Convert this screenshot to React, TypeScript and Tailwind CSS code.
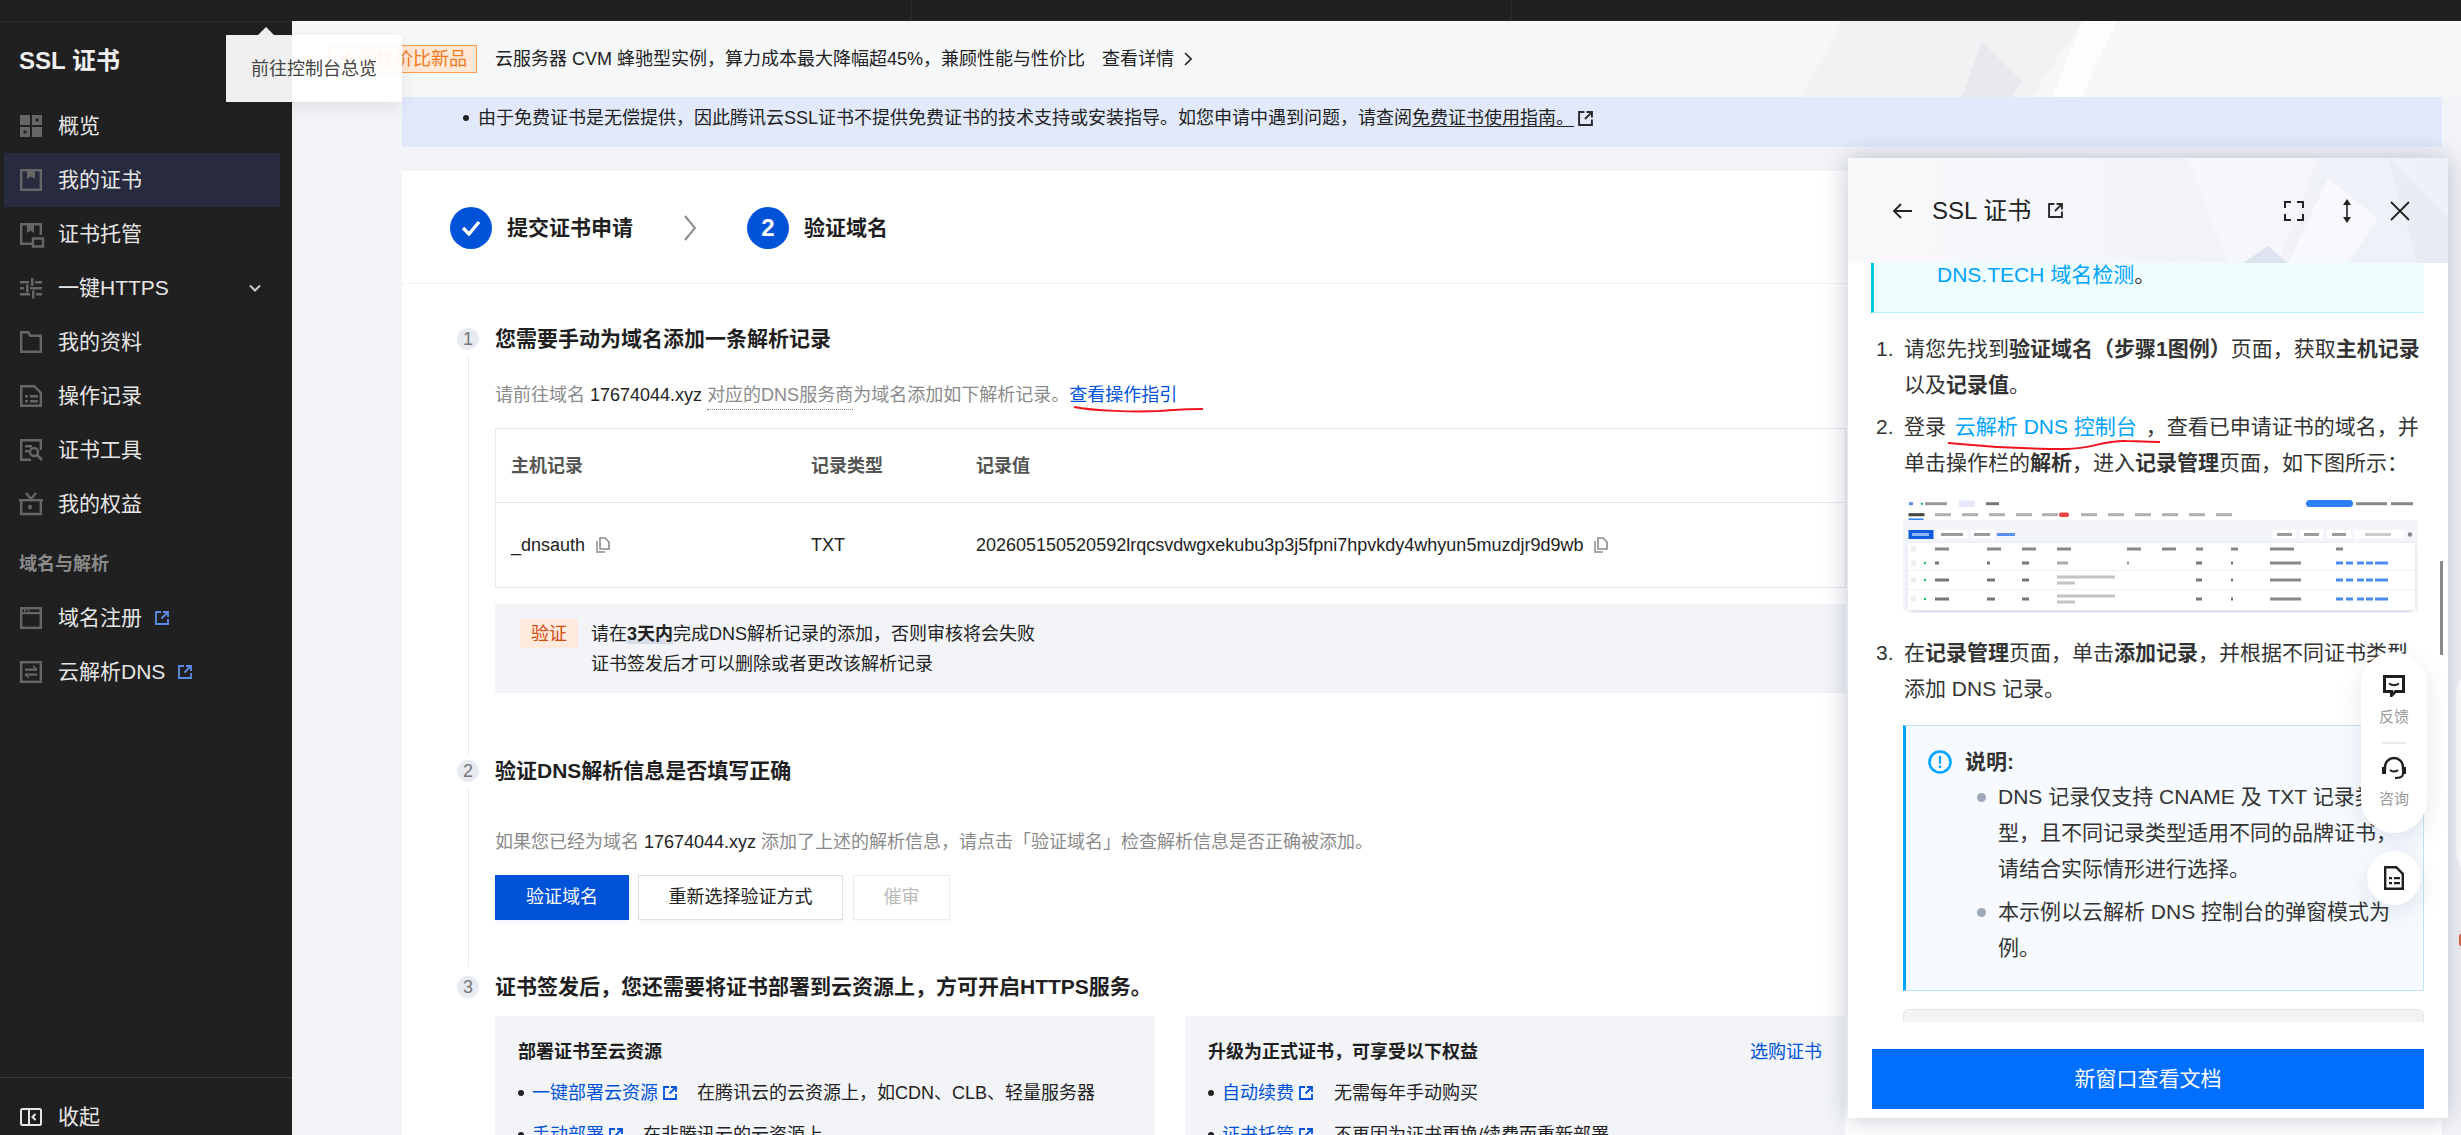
import React from "react";

const Ext = ({ c = "#2b2b2b", s = 14 }: { c?: string; s?: number }) => (
  <svg width={s} height={s} viewBox="0 0 14 14" fill="none" stroke={c} strokeWidth="1.8" className="shrink-0">
    <path d="M6 1H1v12h12V8" />
    <path d="M8 1h5v5" />
    <path d="M13 1 6.5 7.5" />
  </svg>
);

const Copy = () => (
  <svg width="14" height="16" viewBox="0 0 14 16" fill="none" className="shrink-0">
    <path d="M4 1h5l4 4v7H4z" stroke="#8a8a8a" strokeWidth="1.6" />
    <path d="M1 4v11h8" stroke="#a8a8a8" strokeWidth="2" />
  </svg>
);

const G = "#666666";
const icons: Record<string, React.ReactNode> = {
  overview: (
    <>
      <rect x="0" y="0" width="10" height="10" fill={G} />
      <rect x="12" y="0" width="10" height="10" fill={G} />
      <rect x="15.5" y="3.5" width="3" height="3" fill="#202020" />
      <rect x="0" y="12" width="10" height="10" fill={G} />
      <rect x="3.5" y="15.5" width="3" height="3" fill="#202020" />
      <rect x="12" y="12" width="10" height="10" fill={G} />
    </>
  ),
  cert: (
    <>
      <rect x="1.2" y="1.2" width="19.6" height="19.6" fill="none" stroke={G} strokeWidth="2.4" />
      <path d="M7 2v8l4-2.4L15 10V2z" fill={G} />
    </>
  ),
  host: (
    <>
      <path d="M14 20.8H1.2V1.2h19.6V13" fill="none" stroke={G} strokeWidth="2.4" />
      <path d="M7 2v8l3.5-2.4L14 10V2z" fill={G} />
      <path d="M13 15.5h10v8H13z" fill="none" stroke={G} strokeWidth="2.4" />
      <path d="M13 12h10v2H13z" fill="#202020" />
    </>
  ),
  https: (
    <>
      <path d="M0 4h9v2.5H0zM15 4h7v2.5h-7zM0 10h4v2.5H0zM10 10h12v2.5H10zM0 16h10v2.5H0zM16 16h6v2.5h-6z" fill={G} />
      <path d="M11 1h2.5v8H11zM6 7.5h2.5v8H6zM12 13.5h2.5v8H12z" fill={G} />
    </>
  ),
  folder: <path d="M1.2 20.8V1.2h7l2 3.6h10.6v16z" fill="none" stroke={G} strokeWidth="2.4" />,
  record: (
    <>
      <path d="M1.2 20.8V1.2h13l6.6 6.6v13z" fill="none" stroke={G} strokeWidth="2.4" />
      <path d="M5 10h3v2.4H5zM10 10h8v2.4h-8zM5 15h3v2.4H5zM10 15h8v2.4h-8z" fill={G} />
    </>
  ),
  tool: (
    <>
      <path d="M11 20.8H1.2V1.2h19.6V11" fill="none" stroke={G} strokeWidth="2.4" />
      <path d="M5 6h7v2.4H5zM5 11h4v2.4H5z" fill={G} />
      <circle cx="14" cy="13" r="4" fill="none" stroke={G} strokeWidth="2.4" />
      <path d="m17 16 5 5" stroke={G} strokeWidth="2.8" />
    </>
  ),
  gift: (
    <>
      <path d="M-1 6h24v2.4H-1z" fill={G} />
      <path d="M1.2 8v13h19.6V8" fill="none" stroke={G} strokeWidth="2.4" />
      <path d="M6 0l5 6 5-6" fill="none" stroke={G} strokeWidth="2.4" />
      <circle cx="10" cy="14" r="2.2" fill={G} />
    </>
  ),
  domain: (
    <>
      <rect x="1.2" y="1.2" width="19.6" height="19.6" fill="none" stroke={G} strokeWidth="2.4" />
      <path d="M1 5h20v2.2H1z" fill={G} />
      <path d="M4 2.5h2v2H4zM7.5 2.5h2v2h-2z" fill={G} />
    </>
  ),
  dns: (
    <>
      <rect x="1.2" y="1.2" width="19.6" height="19.6" fill="none" stroke={G} strokeWidth="2.4" />
      <path d="M5 7.5h12v2.2H5zM5 12.5h12v2.2H5z" fill={G} />
      <path d="m13 5 4 3.5M9 17l-4-3.5" stroke={G} strokeWidth="1.6" fill="none" />
    </>
  ),
};

const Item = ({
  icon,
  label,
  active,
  ext,
  chevron,
}: {
  icon: string;
  label: string;
  active?: boolean;
  ext?: boolean;
  chevron?: boolean;
}) => (
  <div className={`mr-3 ml-1 flex h-[54px] items-center pl-4 ${active ? "bg-[#282b3e]" : ""}`}>
    <svg width="22" height="22" viewBox="0 0 22 22" className="shrink-0 overflow-visible">
      {icons[icon]}
    </svg>
    <span className="ml-4 text-[21px] leading-6 text-[#e6e6e6]">{label}</span>
    {ext && (
      <span className="ml-[13px]">
        <Ext c="#5b8de8" />
      </span>
    )}
    {chevron && (
      <svg width="12" height="8" viewBox="0 0 12 8" fill="none" stroke="#cccccc" strokeWidth="2" className="mr-[19px] ml-auto">
        <path d="m1 1.5 5 5 5-5" />
      </svg>
    )}
  </div>
);

const Badge = ({ n }: { n: number }) => (
  <div className="flex h-[22px] w-[22px] shrink-0 items-center justify-center rounded-full bg-[#e8ebf1] text-[18px] leading-none text-[#777777]">
    {n}
  </div>
);

const Section = ({ n, children, line = true, gap }: { n: number; children: React.ReactNode; line?: boolean; gap: string }) => (
  <div className={`flex gap-4 ${gap}`}>
    <div className="flex w-[22px] shrink-0 flex-col items-center">
      <Badge n={n} />
      {line && <div className="mt-[7px] w-px flex-1 bg-[#e8ebf1]" />}
    </div>
    <div className="min-w-0 flex-1">{children}</div>
  </div>
);

const Title = ({ children }: { children: React.ReactNode }) => (
  <div className="text-[21px] leading-[22px] font-bold text-[#1f1f1f]">{children}</div>
);

const Bullet = ({ link, text, w }: { link: string; text: string; w: string }) => (
  <div className="flex h-6 items-center text-[18px] leading-6 text-[#222222]">
    <span className="mr-2 h-[6px] w-[6px] shrink-0 rounded-full bg-[#222222]" />
    <span className="flex items-center gap-[5px] text-[#0052d9]">
      {link}
      <Ext c="#0052d9" />
    </span>
    <span className={w}>{text}</span>
  </div>
);

function Thumb() {
  const rows = [
    { y: 65, a: true },
    { y: 82, a: false },
    { y: 101, a: false },
  ];
  const tabs = [5.5, 32, 59, 86, 113, 139, 178, 205, 232, 259, 286, 313];
  const heads = [32, 84, 119, 154, 224, 259, 293, 328, 367];
  const ops = [433, 443, 454, 463, 472];
  const T = ({ x, y, w, c = "#9a9a9a" }: { x: number; y: number; w: number; c?: string }) => (
    <rect x={x} y={y - 1.5} width={w} height="3" fill={c} />
  );
  return (
    <svg width="515" height="115" viewBox="0 0 515 115" className="block">
      <defs>
        <filter id="b" x="-5%" y="-5%" width="110%" height="110%">
          <feGaussianBlur stdDeviation="0.4" />
        </filter>
        <filter id="s" x="-5%" y="-20%" width="110%" height="140%">
          <feGaussianBlur stdDeviation="3" />
        </filter>
      </defs>
      <rect width="515" height="115" fill="#ffffff" />
      <rect y="22" width="515" height="90" fill="#f3f5fa" />
      <rect x="7" y="48" width="503" height="66" fill="#ced3e2" filter="url(#s)" />
      <rect x="5" y="45" width="507" height="67" fill="#ffffff" />
      <path d="M5 72.5h507M5 91.5h507" stroke="#f1f2f5" />
      <rect x="5.5" y="20.5" width="15" height="1.5" fill="#2f7ff0" />
      <rect x="5.5" y="32" width="25" height="9" fill="#0f5ce0" />
      <rect x="34.5" y="32" width="29.5" height="9" fill="#ffffff" />
      <rect x="68" y="32" width="23" height="9" fill="#ffffff" />
      <rect x="370" y="32" width="23" height="9" fill="#ffffff" />
      <rect x="397" y="32" width="23" height="9" fill="#ffffff" />
      <rect x="424" y="32" width="24" height="9" fill="#ffffff" />
      <rect x="451" y="32" width="50" height="9" fill="#ffffff" />
      <g filter="url(#b)">
        <T x={6} y={5.7} w={4} c="#5a8ff0" />
        <circle cx="19" cy="5.7" r="1.2" fill="#16c060" />
        <T x={22} y={5.7} w={22} c="#999999" />
        <rect x="56" y="2.5" width="16" height="6.5" fill="#e6e8fb" />
        <T x={83} y={5.7} w={13} c="#777777" />
        <rect x="403" y="2" width="47" height="7" rx="3.5" fill="#2f80f7" />
        <T x={453} y={5.7} w={31} c="#888888" />
        <T x={488} y={5.7} w={22} c="#888888" />
        {tabs.map((x, i) => (
          <T key={x} x={x} y={16.7} w={16} c={i === 0 ? "#444444" : "#b0b0b0"} />
        ))}
        <rect x="156" y="14.5" width="10" height="4.5" rx="2" fill="#ef4444" />
        <T x={9} y={36.5} w={17} c="#8fb4f5" />
        <T x={38} y={36.5} w={22} />
        <T x={71} y={36.5} w={16} />
        <T x={94} y={36.5} w={18} c="#5a8ff0" />
        <T x={374} y={36.5} w={15} />
        <T x={401} y={36.5} w={15} />
        <T x={429} y={36.5} w={14} />
        <T x={462} y={36.5} w={26} c="#cccccc" />
        <circle cx="507" cy="36.5" r="2.2" fill="#888888" />
        {heads.map((x) => (
          <T key={x} x={x} y={51} w={x === 293 || x === 328 ? 7 : x === 367 ? 24 : 14} c="#888888" />
        ))}
        <T x={433} y={51} w={7} c="#888888" />
        <rect x="8" y="48.5" width="5" height="5" fill="#eeeeee" />
        {rows.map(({ y, a }) => (
          <g key={y}>
            <rect x="8" y={y - 2.5} width="5" height="5" fill="#eeeeee" />
            <circle cx="22" cy={y} r="1.2" fill="#16c060" />
            <T x={32} y={y} w={a ? 4 : 14} c="#777777" />
            <T x={84} y={y} w={a ? 3 : 8} c="#777777" />
            <T x={119} y={y} w={7} c="#777777" />
            {a ? (
              <T x={154} y={y} w={11} c="#aaaaaa" />
            ) : (
              <>
                <T x={154} y={y - 3} w={58} c="#c4c4c4" />
                <T x={154} y={y + 3} w={18} c="#c4c4c4" />
              </>
            )}
            {a && <T x={224} y={y} w={2} c="#999999" />}
            <T x={293} y={y} w={6} c="#777777" />
            <T x={328} y={y} w={2} c="#777777" />
            <T x={367} y={y} w={31} c="#888888" />
            {ops.map((x) => (
              <T key={x} x={x} y={y} w={x === 472 ? 13 : 7} c="#4a8cf0" />
            ))}
          </g>
        ))}
      </g>
    </svg>
  );
}

const Decor = () => (
  <svg className="absolute inset-0 h-full w-full" preserveAspectRatio="none" viewBox="0 0 600 105">
    <polygon points="340,0 470,0 430,105 380,105" fill="#ffffff" opacity="0.35" />
    <polygon points="480,20 530,60 500,105 440,105" fill="#ffffff" opacity="0.5" />
    <polygon points="540,0 600,60 600,105 570,105" fill="#e4e7f3" opacity="0.6" />
    <polygon points="420,88 440,105 395,105" fill="#cfd6ea" opacity="0.6" />
  </svg>
);

export default function App() {
  return (
    <div className="relative h-[1135px] w-[2461px] overflow-hidden bg-[#f3f4f8] [font-family:'Liberation_Sans','Noto_Sans_CJK_SC',sans-serif]">
      <div className="flex h-[21px] bg-[#202020]">
        <div className="w-[912px] border-r border-[#2c2c2c]" />
        <div className="w-[600px] border-r border-[#2c2c2c]" />
      </div>

      <div className="flex h-[1114px]">
        <aside className="flex w-[292px] shrink-0 flex-col border-t border-[#2c2c2c] bg-[#202020]">
          <div className="flex h-[77px] items-center pl-[19px] text-[24px] font-bold text-[#f0f0f0]">SSL 证书</div>
          <Item icon="overview" label="概览" />
          <Item icon="cert" label="我的证书" active />
          <Item icon="host" label="证书托管" />
          <Item icon="https" label="一键HTTPS" chevron />
          <Item icon="folder" label="我的资料" />
          <Item icon="record" label="操作记录" />
          <Item icon="tool" label="证书工具" />
          <Item icon="gift" label="我的权益" />
          <div className="flex h-[60px] items-center pt-[6px] pl-[19px] text-[18px] font-bold text-[#8a8a8a]">域名与解析</div>
          <Item icon="domain" label="域名注册" ext />
          <Item icon="dns" label="云解析DNS" ext />
          <div className="mt-auto flex h-[58px] items-center border-t border-[#3a3a3a] pt-[20px] pl-5">
            <svg width="22" height="18" viewBox="0 0 22 18" fill="none" stroke="#e6e6e6" strokeWidth="2" className="shrink-0">
              <rect x="1" y="1" width="20" height="16" rx="1.5" />
              <path d="M9 1v16M15.5 6 12.5 9l3 3" />
            </svg>
            <span className="ml-4 text-[21px] leading-6 text-[#e6e6e6]">收起</span>
          </div>
        </aside>

        <main className="min-w-0 flex-1 overflow-hidden">
          <div className="relative flex h-[76px] items-center overflow-hidden bg-[#f6f7f9] pl-9">
            <svg className="absolute top-0 left-[1490px] h-[76px] w-[420px]" viewBox="0 0 420 76" fill="none">
              <polygon points="60,0 300,0 250,76 20,76" fill="#f1f2f4" />
              <polygon points="200,20 240,60 230,76 180,76" fill="#e8e9ec" />
              <polygon points="300,0 335,0 300,76 270,76" fill="#ffffff" opacity="0.7" />
            </svg>
            <div className="relative flex h-7 w-[149px] items-center border border-[#ff9c4d] bg-[#ffe8d6] pl-[11px] text-[18px] leading-6 text-[#f27a1a]">
              <svg width="14" height="18" viewBox="0 0 14 18" className="mr-[5px]">
                <path d="M9 0 1 10h5l-2 8 9-11H8z" fill="#f27a1a" />
              </svg>
              高性价比新品
            </div>
            <div className="relative ml-[18px] text-[18px] leading-6 text-[#222222]">云服务器 CVM 蜂驰型实例，算力成本最大降幅超45%，兼顾性能与性价比</div>
            <div className="relative ml-[17px] flex items-center gap-[10px] text-[18px] leading-6 text-[#222222]">
              查看详情
              <svg width="8" height="14" viewBox="0 0 8 14" fill="none" stroke="#222222" strokeWidth="1.6">
                <path d="m1 1 6 6-6 6" />
              </svg>
            </div>
          </div>

          <div className="pr-[19px] pl-[110px]">
            <div className="flex h-[50px] items-start bg-[#e1e9fb] pt-[9px] pl-[61px] text-[18px] leading-6 text-[#222222]">
              <span className="mt-[9px] mr-[9px] h-[6px] w-[6px] rounded-full bg-[#222222]" />
              <span className="whitespace-nowrap">
                由于免费证书是无偿提供，因此腾讯云SSL证书不提供免费证书的技术支持或安装指导。如您申请中遇到问题，请查阅
                <span className="underline underline-offset-2">免费证书使用指南。</span>
              </span>
              <span className="mt-[5px] ml-[4px]">
                <Ext s={15} />
              </span>
            </div>

            <div className="mt-6 h-[1000px] bg-white">
              <div className="flex h-[113px] items-center border-b border-[#f3f3f6] pt-[2px] pl-12">
                <div className="flex h-[42px] w-[42px] items-center justify-center rounded-full bg-[#0052d9]">
                  <svg width="20" height="16" viewBox="0 0 20 16" fill="none" stroke="#ffffff" strokeWidth="3.4">
                    <path d="m2 8 6 6L18 2" />
                  </svg>
                </div>
                <span className="ml-[15px] w-[126px] text-[21px] leading-6 font-bold text-[#1f1f1f]">提交证书申请</span>
                <svg width="12" height="26" viewBox="0 0 12 26" fill="none" stroke="#8c8c8c" strokeWidth="2" className="mx-[51px]">
                  <path d="m1 1 10 12L1 25" />
                </svg>
                <div className="flex h-[42px] w-[42px] items-center justify-center rounded-full bg-[#0052d9] text-[24px] font-bold text-white">2</div>
                <span className="ml-[15px] text-[21px] leading-6 font-bold text-[#1f1f1f]">验证域名</span>
              </div>

              <div className="pt-[44px] pl-[55px] whitespace-nowrap">
                <Section n={1} gap="mb-[6px]">
                  <Title>您需要手动为域名添加一条解析记录</Title>
                  <div className="mt-[33px] text-[18px] leading-6 text-[#8a8a8a]">
                    请前往域名 <span className="text-[#222222]">17674044.xyz</span>{" "}
                    <span className="border-b border-dotted border-[#888888] pb-[4px]">对应的DNS服务商</span>为域名添加如下解析记录。
                    <span className="text-[#0052d9]">查看操作指引</span>
                  </div>
                  <div className="mt-[21px] w-[1351px] border border-[#e8e8ee] text-[18px] leading-6">
                    <div className="grid h-[74px] grid-cols-[300px_165px_1fr] items-center border-b border-[#e8e8ee] pl-[15px] font-bold text-[#555555]">
                      <span>主机记录</span>
                      <span>记录类型</span>
                      <span>记录值</span>
                    </div>
                    <div className="grid h-[84px] grid-cols-[300px_165px_1fr] items-center pl-[15px] text-[#222222]">
                      <span className="flex items-center gap-[11px]">
                        _dnsauth
                        <Copy />
                      </span>
                      <span>TXT</span>
                      <span className="flex items-center gap-[11px]">
                        202605150520592lrqcsvdwgxekubu3p3j5fpni7hpvkdy4whyun5muzdjr9d9wb
                        <Copy />
                      </span>
                    </div>
                  </div>
                  <div className="mt-4 mb-[61px] flex h-[89px] w-[1351px] bg-[#f2f4f8] pt-[15px] pl-[25px] text-[18px] text-[#222222]">
                    <span className="flex h-[29px] w-[58px] items-center justify-center bg-[#ffeadd] leading-6 text-[#d54a0e]">验证</span>
                    <div className="ml-[13px] leading-[30px]">
                      <div>
                        请在
                        <span className="bg-linear-to-b from-transparent from-75% to-[#d6dce8] to-75% font-bold">3天内</span>
                        完成DNS解析记录的添加，否则审核将会失败
                      </div>
                      <div>证书签发后才可以删除或者更改该解析记录</div>
                    </div>
                  </div>
                </Section>

                <Section n={2} gap="mb-[9px]">
                  <Title>验证DNS解析信息是否填写正确</Title>
                  <div className="mt-[48px] text-[18px] leading-6 text-[#8a8a8a]">
                    如果您已经为域名 <span className="text-[#222222]">17674044.xyz</span> 添加了上述的解析信息，请点击「验证域名」检查解析信息是否正确被添加。
                  </div>
                  <div className="mt-[21px] mb-[47px] flex gap-[9px] text-[18px]">
                    <button className="h-[45px] w-[134px] bg-[#0052d9] text-white shadow-[0_3px_3px_rgba(0,82,217,0.05)]">验证域名</button>
                    <button className="h-[45px] w-[205px] border border-[#dcdfe7] bg-white text-[#222222] shadow-[0_3px_3px_rgba(0,0,0,0.03)]">重新选择验证方式</button>
                    <button className="ml-px h-[45px] w-[97px] border border-[#e8ebf1] bg-white text-[#bbbbbb] shadow-[0_3px_3px_rgba(0,0,0,0.02)]">催审</button>
                  </div>
                </Section>

                <Section n={3} gap="" line={false}>
                  <Title>证书签发后，您还需要将证书部署到云资源上，方可开启HTTPS服务。</Title>
                  <div className="mt-[18px] flex gap-[30px]">
                    <div className="h-[300px] w-[660px] bg-[#f2f4f8] pt-6 pl-[23px]">
                      <div className="text-[18px] leading-6 font-bold text-[#1f1f1f]">部署证书至云资源</div>
                      <div className="mt-[17px] flex flex-col gap-[18px]">
                        <Bullet link="一键部署云资源" text="在腾讯云的云资源上，如CDN、CLB、轻量服务器" w="ml-[20px]" />
                        <Bullet link="手动部署" text="在非腾讯云的云资源上" w="ml-[20px]" />
                      </div>
                    </div>
                    <div className="h-[300px] w-[660px] bg-[#f2f4f8] pt-6 pr-[23px] pl-[23px]">
                      <div className="flex justify-between text-[18px] leading-6">
                        <span className="font-bold text-[#1f1f1f]">升级为正式证书，可享受以下权益</span>
                        <span className="text-[#0052d9]">选购证书</span>
                      </div>
                      <div className="mt-[17px] flex flex-col gap-[18px]">
                        <Bullet link="自动续费" text="无需每年手动购买" w="ml-[21px]" />
                        <Bullet link="证书托管" text="不再因为证书更换/续费而重新部署" w="ml-[21px]" />
                      </div>
                    </div>
                  </div>
                </Section>
              </div>
            </div>
          </div>
        </main>
      </div>

      {/* scribble under 查看操作指引 */}
      <svg className="pointer-events-none absolute top-[400px] left-[1070px]" width="140" height="18" fill="none" stroke="#f0141e" strokeWidth="2">
        <path d="M4 7c20 4 60 5 85 4 16-1 25-2 44-2" />
      </svg>

      {/* tooltip */}
      <svg className="absolute top-[27px] left-[258px]" width="16" height="8" viewBox="0 0 16 8">
        <path d="M8 0 16 8H0z" fill="#ffffff" fillOpacity="0.93" />
      </svg>
      <div className="absolute top-[35px] left-[226px] flex h-[67px] w-[176px] items-center bg-white/[0.93] pl-[25px] text-[18px] leading-6 text-[#444444] shadow-[0_6px_16px_rgba(0,0,0,0.08)]">
        前往控制台总览
      </div>

      {/* widget behind the document panel */}
      <div className="absolute top-[673px] left-[2456px] h-[200px] w-10 rounded-[20px] bg-white" />
      <div className="absolute top-[920px] left-[2456px] flex h-10 w-10 items-center rounded-full bg-[#f3efee] pl-[3px]">
        <span className="h-3 w-1 rounded-sm bg-[#d9694a]" />
      </div>

      {/* document panel */}
      <div className="absolute top-[158px] left-[1848px] flex h-[960px] w-[600px] flex-col bg-white shadow-[0_0_24px_rgba(40,50,90,0.28)]">
        <div className="relative h-[105px] shrink-0 overflow-hidden bg-linear-to-r from-[#f9f9fb] to-[#eef0f8]">
          <Decor />
          <div className="relative flex h-full items-center pl-[44px] text-[#222222]">
            <svg width="20" height="18" viewBox="0 0 20 18" fill="none" stroke="#222222" strokeWidth="1.8">
              <path d="M20 9H2M9 2 2 9l7 7" />
            </svg>
            <span className="ml-[20px] text-[24px] leading-7">SSL 证书</span>
            <span className="ml-[17px]">
              <Ext s={15} />
            </span>
            <svg width="20" height="20" viewBox="0 0 20 20" fill="none" stroke="#222222" strokeWidth="2" className="ml-[221px]">
              <path d="M7 1H1v6M13 1h6v6M7 19H1v-6M13 19h6v-6" />
            </svg>
            <svg width="10" height="24" viewBox="0 0 10 24" fill="#222222" className="ml-[38px]">
              <path d="M4.2 5h1.6v14H4.2z" />
              <path d="M5 0 9 6H1zM5 24 1 18h8z" />
            </svg>
            <svg width="20" height="20" viewBox="0 0 20 20" fill="none" stroke="#222222" strokeWidth="1.8" className="ml-[38px]">
              <path d="m1 1 18 18M19 1 1 19" />
            </svg>
          </div>
        </div>

        <div className="relative min-h-0 flex-1 overflow-hidden pl-[23px] whitespace-nowrap text-[#333333]">
          <div className="h-[50px] w-[553px] rounded-r-[2px] border-b border-l-[3px] border-[#b5f2f8] border-l-[#00c8dc] bg-[#effeff] pl-[63px] text-[21px] leading-6 text-[#00a4ff]">
            DNS.TECH 域名检测<span className="text-[#333333]">。</span>
          </div>
          <div className="mt-[18px] text-[21px] leading-9">
            <div className="flex">
              <span className="w-[33px] pl-[5px]">1.</span>
              <div>
                请您先找到<b>验证域名（步骤1图例）</b>页面，获取<b>主机记录</b>
                <br />
                以及<b>记录值</b>。
              </div>
            </div>
            <div className="mt-[6px] flex">
              <span className="w-[33px] pl-[5px]">2.</span>
              <div>
                登录 <span className="ml-[3px] text-[#00a4ff]">云解析 DNS 控制台</span> <span className="ml-[3px]">，</span>查看已申请证书的域名，并
                <br />
                单击操作栏的<b>解析</b>，进入<b>记录管理</b>页面，如下图所示：
              </div>
            </div>
            <div className="mt-[17px] ml-[32px]">
              <Thumb />
            </div>
            <div className="mt-[22px] flex">
              <span className="w-[33px] pl-[5px]">3.</span>
              <div>
                在<b>记录管理</b>页面，单击<b>添加记录</b>，并根据不同证书类型
                <br />
                添加 DNS 记录。
              </div>
            </div>
            <div className="mt-[18px] ml-[32px] h-[266px] w-[521px] rounded-r-[2px] border border-l-[3px] border-[#bfe3f2] border-l-[#00a4ff] bg-[#f7fbff] pt-[18px]">
              <div className="flex items-center pl-[22px]">
                <svg width="24" height="24" viewBox="0 0 24 24" fill="none" className="shrink-0">
                  <circle cx="12" cy="12" r="10.5" stroke="#00a4ff" strokeWidth="2.6" />
                  <path d="M10.8 6h2.4l-.3 8h-1.8zM10.8 15.5h2.4V18h-2.4z" fill="#00a4ff" />
                </svg>
                <b className="ml-[13px]">说明:</b>
              </div>
              <div className="mt-[-1px] pl-[92px]">
                <div className="relative">
                  <span className="absolute top-[14px] -left-[21px] h-[9px] w-[9px] rounded-full bg-[#a0a8bb]" />
                  DNS 记录仅支持 CNAME 及 TXT 记录类
                  <br />
                  型，且不同记录类型适用不同的品牌证书，
                  <br />
                  请结合实际情形进行选择。
                </div>
                <div className="relative mt-[7px]">
                  <span className="absolute top-[14px] -left-[21px] h-[9px] w-[9px] rounded-full bg-[#a0a8bb]" />
                  本示例以云解析 DNS 控制台的弹窗模式为
                  <br />
                  例。
                </div>
              </div>
            </div>
            <div className="mt-[18px] ml-[32px] h-10 w-[521px] rounded-t-[6px] border border-[#e3e4e8] bg-[#f2f3f5]" />
          </div>
        </div>

        <div className="h-[96px] shrink-0 pt-[27px] pl-6">
          <div className="flex h-[60px] w-[552px] items-center justify-center bg-[#006eff] text-[21px] text-white">新窗口查看文档</div>
        </div>

        {/* scrollbar */}
        <div className="absolute top-[403px] left-[592px] h-[94px] w-[3px] bg-[#8a8a8a]" />

        {/* scribble under the 云解析 DNS link */}
        <svg className="pointer-events-none absolute top-[278px] left-[96px]" width="224" height="16" fill="none" stroke="#f0141e" strokeWidth="2">
          <path d="M4 7c30 3 70 6 118 6 26 0 38-9 60-8 10 0 14 1 34 1" />
        </svg>

        {/* floating help widgets */}
        <div className="absolute top-[494px] left-[513px] flex h-[181px] w-[66px] flex-col items-center rounded-[33px] bg-white pt-[23px] shadow-[0_8px_24px_rgba(40,60,110,0.12)]">
          <svg width="22" height="22" viewBox="0 0 22 22" fill="none">
            <path d="M1.5 1.5h19v15H12.5l-4 4v-4h-7z" stroke="#1f1f1f" strokeWidth="3" />
            <path d="M6 8.5c3 2 7 2 10 0" stroke="#1f1f1f" strokeWidth="2" />
          </svg>
          <span className="mt-[10px] text-[15px] leading-5 text-[#999999]">反馈</span>
          <span className="mt-[15px] h-[2px] w-6 bg-[#e8ebf1]" />
          <svg width="24" height="24" viewBox="0 0 24 24" fill="none" className="mt-[12px]">
            <path d="M3 14v-3a9 9 0 0 1 18 0v3" stroke="#1f1f1f" strokeWidth="2.4" />
            <path d="M0 11h4v7H0zM20 11h4v7h-4z" fill="#1f1f1f" />
            <path d="M8 14c2 2 6 2 8 0" stroke="#1f1f1f" strokeWidth="2" />
            <path d="M21 18c0 3-3 4-8 4" stroke="#1f1f1f" strokeWidth="2" />
          </svg>
          <span className="mt-[9px] text-[15px] leading-5 text-[#999999]">咨询</span>
        </div>
        <div className="absolute top-[693px] left-[519px] flex h-[54px] w-[54px] items-center justify-center rounded-full bg-white shadow-[0_8px_24px_rgba(40,60,110,0.12)]">
          <svg width="20" height="24" viewBox="0 0 20 24" fill="none">
            <path d="M1.2 22.8V1.2h11l6.6 6.6v15z" stroke="#1f1f1f" strokeWidth="2.4" />
            <path d="M5 11h3v2.2H5zM10 11h6v2.2h-6zM5 16h3v2.2H5zM10 16h6v2.2h-6z" fill="#1f1f1f" />
          </svg>
        </div>
      </div>
    </div>
  );
}
